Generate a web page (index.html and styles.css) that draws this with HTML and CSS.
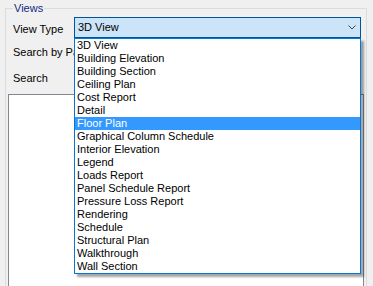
FILE: index.html
```html
<!DOCTYPE html>
<html>
<head>
<meta charset="utf-8">
<link rel="stylesheet" href="styles.css">
</head>
<body>
<div class="group">
  <span class="legend">Views</span>
  <div class="rows">
    <div class="row first">
      <span class="label">View Type</span>
      <div class="combo-wrap">
        <div class="combo">
          <span>3D View</span>
          <svg class="chev" width="8" height="5" viewBox="0 0 8 5"><polyline points="0.5,0.5 4,4 7.5,0.5" fill="none" stroke="#444" stroke-width="1"/></svg>
        </div>
        <ul class="dropdown">
          <li>3D View</li>
          <li>Building Elevation</li>
          <li>Building Section</li>
          <li>Ceiling Plan</li>
          <li>Cost Report</li>
          <li>Detail</li>
          <li class="sel">Floor Plan</li>
          <li>Graphical Column Schedule</li>
          <li>Interior Elevation</li>
          <li>Legend</li>
          <li>Loads Report</li>
          <li>Panel Schedule Report</li>
          <li>Pressure Loss Report</li>
          <li>Rendering</li>
          <li>Schedule</li>
          <li>Structural Plan</li>
          <li>Walkthrough</li>
          <li>Wall Section</li>
        </ul>
      </div>
    </div>
    <div class="row second"><span class="label">Search by Parameter</span></div>
    <div class="row third"><span class="label">Search</span></div>
  </div>
  <div class="listbox"></div>
</div>
</body>
</html>
```
FILE: styles.css
```css
html, body {
  margin: 0;
  padding: 0;
}
body {
  width: 373px;
  height: 286px;
  overflow: hidden;
  background: #f0f0f0;
  font-family: "Liberation Sans", Arial, sans-serif;
  font-size: 11px;
  line-height: 13px;
  color: #000;
}
.group {
  position: relative;
  margin: 8px 6px 0 5px;
  border: 1px solid #dcdcdc;
  border-bottom: 0;
  height: 290px;
}
.legend {
  position: absolute;
  top: -7px;
  left: 7px;
  padding: 0 1px;
  background: #f0f0f0;
  color: #102a80;
  line-height: 13px;
}
.rows {
  padding: 8px 0 0 7px;
}
.row {
  display: flex;
}
.row.first {
  height: 21px;
}
.row.first .label {
  width: 61px;
  padding-top: 6px;
  flex: none;
}
.row.second {
  margin-top: 8px;
}
.row.third {
  margin-top: 13px;
}
.label {
  white-space: nowrap;
  overflow: hidden;
  line-height: 13px;
}
.row.second .label {
  width: 61px;
}
.combo-wrap {
  position: relative;
  width: 287px;
  z-index: 2;
}
.combo {
  box-sizing: border-box;
  height: 21px;
  border: 1px solid #005499;
  background: #cce4f7;
  display: flex;
  align-items: center;
  justify-content: space-between;
  padding: 0 4px 0 3px;
  line-height: 19px;
}
.chev {
  display: block;
}
.dropdown {
  position: absolute;
  top: 100%;
  left: 0;
  box-sizing: border-box;
  width: 287px;
  margin: 0;
  padding: 0;
  list-style: none;
  background: #fff;
  border: 1px solid #0078d7;
  box-shadow: 3px 3px 2px rgba(0, 0, 0, 0.35);
}
.dropdown li {
  height: 13px;
  line-height: 13px;
  padding-left: 2px;
  white-space: nowrap;
}
.dropdown li.sel {
  background: #3399ff;
  color: #fff;
}
.listbox {
  margin: 9px 2px 0 2px;
  height: 200px;
  background: #fff;
  border: 1px solid #828790;
}
```
